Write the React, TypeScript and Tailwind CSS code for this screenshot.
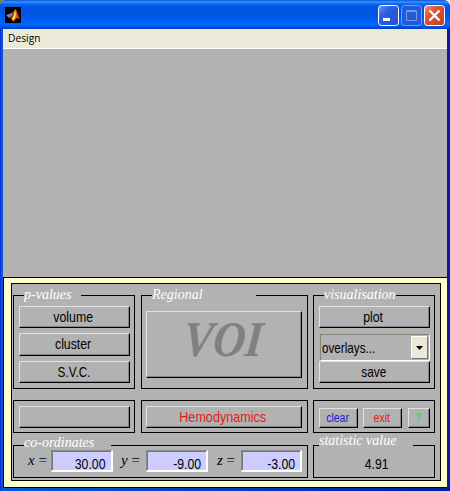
import React from 'react';

type GroupProps = { title?: string; gap?: string; titleClass?: string; className: string; children: React.ReactNode };

// Black outlined frame whose legend interrupts the top edge.
function Group({ title, gap = '', titleClass = '', className, children }: GroupProps) {
  return (
    <div className={`relative border border-black ${className}`}>
      {title && <div className={`absolute -top-px h-px bg-[#b2b2b2] ${gap}`} />}
      {title && (
        <span
          className={`absolute origin-left whitespace-pre font-['Liberation_Serif',serif] text-[14px] leading-[16px] text-white italic ${titleClass}`}
        >
          {title}
        </span>
      )}
      {children}
    </div>
  );
}

function Button({ className, textClass = '', children }: { className: string; textClass?: string; children?: React.ReactNode }) {
  return (
    <button
      className={`flex shrink-0 items-center justify-center border border-t-[#e2e2e2] border-r-black border-b-black border-l-[#e2e2e2] bg-[#b2b2b2] pr-[2px] shadow-[inset_-1px_-1px_0_#858585] ${className}`}
    >
      <span className={`inline-block whitespace-pre ${textClass}`}>{children}</span>
    </button>
  );
}

function Field({ value, className }: { value: string; className: string }) {
  return (
    <div
      className={`flex h-[22px] shrink-0 justify-end border-t border-r-2 border-b-2 border-l border-t-[#8a8a8a] border-r-white border-b-white border-l-[#8a8a8a] bg-[#ccccff] pt-[4px] pr-[5px] shadow-[inset_1px_1px_0_#77776f] ${className}`}
    >
      <span className="inline-block origin-right scale-x-[0.82] text-[15px] leading-[17px]">{value}</span>
    </div>
  );
}

function Axis({ children, className }: { children: string; className: string }) {
  return (
    <span
      className={`shrink-0 whitespace-pre pt-[2px] font-['Liberation_Serif',serif] text-[15px] leading-[16px] ${className}`}
    >
      <i>{children}</i> =
    </span>
  );
}

export default function App() {
  return (
    <div className="h-[491px] w-[450px] overflow-hidden bg-[linear-gradient(90deg,#718660_50%,#f5f7ff_50%)] font-['Liberation_Sans',Arial,sans-serif] text-black">
      <div className="flex h-full flex-col rounded-t-[7px] bg-[linear-gradient(90deg,#0831d9_0,#0831d9_1px,#0855dd_1px,#0855dd_3px,#001ea0_447px,#0019a0_450px)]">
        <header className="flex h-[29px] shrink-0 items-start rounded-t-[7px] bg-[linear-gradient(180deg,#0754d5_0,#3b91ff_2px,#0867ed_4px,#0055e5_7px,#0055e5_15px,#0060fa_20px,#0066ff_25px,#0052db_27px,#003dc4_29px)] pt-[5px] pl-[5px]">
          <svg className="mt-[2px] h-4 w-4" viewBox="0 0 16 16">
            <path d="M0 0h16v16H0z" fill="#000" />
            <path d="m1 8 3-1 3-1 3-3-3 6-3 2Z" fill="#6a8f97" />
            <path d="m5 11 2-3 3-5 1 1-2 7-2 2Z" fill="#a62514" />
            <path d="M10 2c2 0 3 7 5 10l-3-1-4 4-1-4c2-1 2-6 3-9Z" fill="#e8481c" />
            <path d="M10 3c1 2 1 5 0 8l-2 3-1-3c2-1 2-5 3-8Z" fill="#ffe047" />
          </svg>
          <div className="mr-[5px] ml-auto flex gap-[2px]">
            <svg className="h-[21px] w-[21px]" viewBox="0 0 21 21">
              <defs>
                <linearGradient id="blue" x1="0" y1="0" x2="1" y2="1">
                  <stop stopColor="#7199f3" />
                  <stop offset=".35" stopColor="#2a5fe0" />
                  <stop offset="1" stopColor="#1f50d3" />
                </linearGradient>
              </defs>
              <rect x=".5" y=".5" width="20" height="20" rx="3" fill="url(#blue)" stroke="#fff" />
              <path d="M5 13h7v3H5z" fill="#fff" />
            </svg>
            <svg className="h-[21px] w-[21px]" viewBox="0 0 21 21">
              <rect x=".5" y=".5" width="20" height="20" rx="3" fill="#2459dc" stroke="#6e9dec" />
              <path d="M5.5 5.5h10v10h-10zM5 6.5h11" fill="none" stroke="#7199ec" />
            </svg>
            <svg className="h-[21px] w-[21px]" viewBox="0 0 21 21">
              <defs>
                <linearGradient id="red" x1="0" y1="0" x2="1" y2="1">
                  <stop stopColor="#f19a7e" />
                  <stop offset=".35" stopColor="#df5431" />
                  <stop offset="1" stopColor="#c73d18" />
                </linearGradient>
              </defs>
              <rect x=".5" y=".5" width="20" height="20" rx="3" fill="url(#red)" stroke="#fff" />
              <path d="m5.5 5.5 10 10m0-10-10 10" stroke="#fff" strokeWidth="2.3" />
            </svg>
          </div>
        </header>

        <main className="mr-[3px] mb-[3px] ml-[3px] flex min-h-0 flex-1 flex-col bg-[#b2b2b2]">
          <nav className="h-5 shrink-0 border-b border-white bg-[#ece9d8] pt-[2px] pl-[5px] font-['Open_Sans',sans-serif] text-[11.5px] leading-[14px]">
            <span className="inline-block origin-left scale-x-[0.89]">Design</span>
          </nav>
          <div className="h-[228px] shrink-0" />

          <section className="min-h-0 flex-1 border-t border-b border-l border-black bg-[#ffffcc] pt-[5px] pr-[6px] pl-[7px]">
            <div className="h-[198px] w-[430px] border border-black bg-[#b2b2b2] pt-[11px] pl-px">
              <div className="flex h-[94px]">
                <Group title="p-values" gap="left-[10px] w-[57px]" titleClass="left-[10px] top-[-9px]" className="w-[122px] pt-[10px] pl-[5px]">
                  <Button className="h-[22px] w-[111px] text-[15px]" textClass="scale-x-[0.82]">volume</Button>
                  <Button className="mt-[5px] h-[23px] w-[111px] text-[15px]" textClass="scale-x-[0.82]">cluster</Button>
                  <Button className="mt-[5px] h-[22px] w-[111px] text-[15px]" textClass="scale-x-[0.78]">S.V.C.</Button>
                </Group>
                <Group title="Regional" gap="left-[10px] w-[104px]" titleClass="left-[10px] top-[-9px]" className="ml-[6px] w-[167px] pt-[15px] pl-[4px]">
                  <Button
                    className="h-[67px] w-[156px] pr-0 pb-[11px] font-['Liberation_Serif',serif] text-[50px] leading-[50px] font-bold text-[#808080] italic"
                    textClass="scale-x-[0.89] -skew-x-6"
                  >
                    VOI
                  </Button>
                </Group>
                <Group title="visualisation" gap="left-[10px] w-[72px]" titleClass="left-[10px] top-[-9px]" className="ml-[5px] w-[122px] pt-[10px] pl-[5px]">
                  <Button className="h-[22px] w-[111px] text-[15px]" textClass="scale-x-[0.82]">plot</Button>
                  <div className="mt-[6px] ml-px flex h-[27px] w-[110px] border-t border-r border-b border-l border-t-[#858575] border-r-white border-b-white border-l-[#858575] pt-px">
                    <span className="mt-[3px] ml-px inline-block w-[60px] shrink-0 origin-left scale-x-[0.78] text-[15px] leading-[17px]">overlays...</span>
                    <div className="mr-px ml-auto flex h-[23px] w-[17px] shrink-0 items-center justify-center border border-t-white border-r-[#77776c] border-b-[#77776c] border-l-white bg-[#ece9d8]">
                      <svg className="h-1 w-[7px]" viewBox="0 0 7 4">
                        <path d="M0 0h7L3.5 4Z" />
                      </svg>
                    </div>
                  </div>
                  <Button className="h-[22px] w-[111px] text-[15px]" textClass="scale-x-[0.79]">save</Button>
                </Group>
              </div>

              <div className="mt-[11px] flex h-[33px]">
                <Group className="w-[122px] pt-[5px] pl-[5px]">
                  <Button className="h-[22px] w-[111px]" />
                </Group>
                <Group className="ml-[6px] w-[167px] pt-[5px] pl-[4px]">
                  <Button className="h-[22px] w-[156px] text-[15px] text-[#e51a20]" textClass="scale-x-[0.84]">Hemodynamics</Button>
                </Group>
                <Group className="ml-[5px] flex w-[122px] pt-[7px] pl-[5px]">
                  <Button className="h-[20px] w-[39px] text-[12.5px] text-[#1d18d5]" textClass="scale-x-[0.84]">clear</Button>
                  <Button className="ml-[5px] h-[20px] w-[39px] text-[12.5px] text-[#e51a20]" textClass="scale-x-[0.84]">exit</Button>
                  <Button className="ml-[6px] h-[20px] w-[22px] text-[12.5px] text-[#28df35]" textClass="scale-x-[0.84]">?</Button>
                </Group>
              </div>

              <div className="mt-[12px] flex h-[33px]">
                <Group title="co-ordinates" gap="left-[10px] w-[87px]" titleClass="left-[10px] top-[-11px]" className="flex w-[295px] pt-[4px] pl-[14px]">
                  <Axis className="w-[23px]">x</Axis>
                  <Field className="w-[62px]" value="30.00" />
                  <Axis className="w-[33px] pl-[8px]">y</Axis>
                  <Field className="w-[62px]" value="-9.00" />
                  <Axis className="w-[33px] pl-[9px]">z</Axis>
                  <Field className="w-[61px]" value="-3.00" />
                </Group>
                <Group title="statistic value" gap="left-[5px] w-[94px]" titleClass="left-[5px] top-[-13px]" className="ml-[5px] flex w-[122px] justify-center pt-[9px] pl-[6px]">
                  <span className="inline-block scale-x-[0.81] text-[15px] leading-[17px]">4.91</span>
                </Group>
              </div>
            </div>
          </section>
        </main>
      </div>
    </div>
  );
}
